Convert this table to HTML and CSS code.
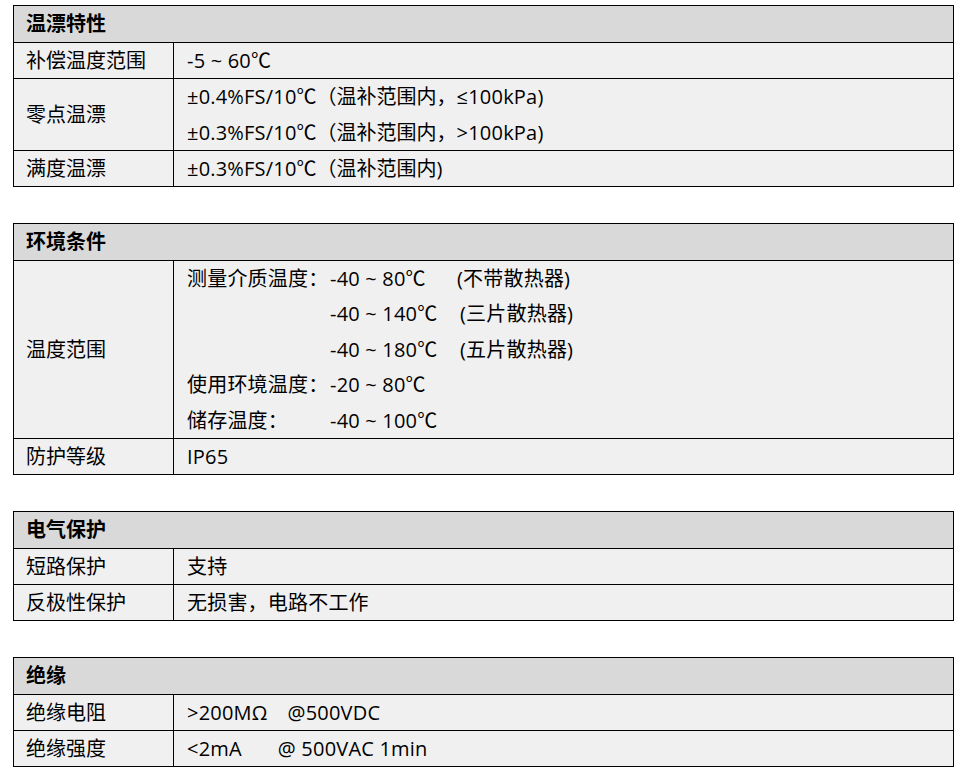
FILE: index.html
```html
<!DOCTYPE html>
<html lang="zh-CN">
<head>
<meta charset="utf-8">
<title>参数</title>
<link rel="stylesheet" href="styles.css">
</head>
<body>
<table class="spec">
  <tr><th colspan="2">温漂特性</th></tr>
  <tr><td class="k">补偿温度范围</td><td>-5 ~ 60<span class="c">℃</span></td></tr>
  <tr><td class="k">零点温漂</td><td class="multi">±0.4%FS/10<span class="c">℃（温补范围内，</span>≤100kPa)<br>±0.3%FS/10<span class="c">℃（温补范围内，</span>&gt;100kPa)</td></tr>
  <tr><td class="k">满度温漂</td><td>±0.3%FS/10<span class="c">℃（温补范围内</span>)</td></tr>
</table>

<table class="spec">
  <tr><th colspan="2">环境条件</th></tr>
  <tr><td class="k">温度范围</td><td class="multi">
    <div class="range">
      <span>测量介质温度：</span><span class="v">-40 ~ 80<span class="c">℃</span></span><span class="n">(不带散热器)</span>
      <span></span><span class="v">-40 ~ 140<span class="c">℃</span></span><span class="n n2">(三片散热器)</span>
      <span></span><span class="v">-40 ~ 180<span class="c">℃</span></span><span class="n n2">(五片散热器)</span>
      <span>使用环境温度：</span><span class="v">-20 ~ 80<span class="c">℃</span></span><span></span>
      <span>储存温度：</span><span class="v">-40 ~ 100<span class="c">℃</span></span><span></span>
    </div>
  </td></tr>
  <tr><td class="k">防护等级</td><td>IP65</td></tr>
</table>

<table class="spec">
  <tr><th colspan="2">电气保护</th></tr>
  <tr><td class="k">短路保护</td><td>支持</td></tr>
  <tr><td class="k">反极性保护</td><td>无损害，电路不工作</td></tr>
</table>

<table class="spec">
  <tr><th colspan="2">绝缘</th></tr>
  <tr><td class="k">绝缘电阻</td><td>&gt;200MΩ<span class="at1">@500VDC</span></td></tr>
  <tr><td class="k">绝缘强度</td><td>&lt;2mA<span class="at2">@ 500VAC 1min</span></td></tr>
</table>
</body>
</html>
```

FILE: styles.css
```css
html, body {
  background: #ffffff;
}
body {
  margin: 5px 0 0 13px;
  font-family: "Open Sans", "Noto Sans CJK SC", sans-serif;
  font-size: 20px;
  color: #000000;
}
.spec {
  width: 941px;
  border-collapse: collapse;
  margin-bottom: 36px;
  background: #f0f0f0;
}
.spec th,
.spec td {
  border: 1px solid #000000;
  padding: 0 0 0 12px;
  height: 35px;
  line-height: 35px;
  text-align: left;
  vertical-align: middle;
  white-space: nowrap;
}
.spec th {
  background: #d9d9d9;
  font-weight: bold;
  height: 36px;
  line-height: 36px;
}
.spec td.k {
  width: 147px;
}
.spec td + td {
  padding-left: 13px;
  letter-spacing: 0.2px;
}
.spec td.multi {
  line-height: 35.5px;
}
.c {
  font-family: "Noto Sans CJK SC", sans-serif;
  letter-spacing: 0;
  line-height: 1;
}
.range {
  display: grid;
  grid-template-columns: 143px 127px auto;
  grid-auto-rows: 35.4px;
}
.range > span {
  line-height: 35.4px;
  overflow: hidden;
}
.n2 {
  margin-left: 3px;
}
.at1 {
  margin-left: 20px;
}
.at2 {
  margin-left: 36px;
}
```
